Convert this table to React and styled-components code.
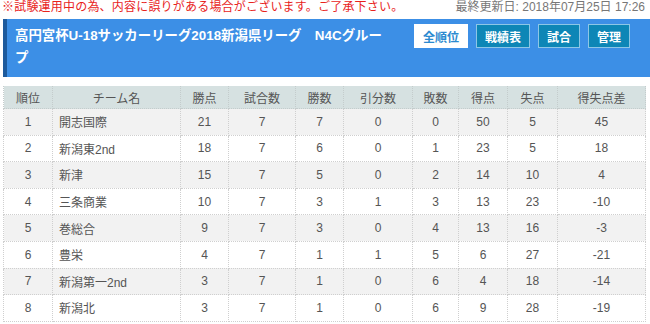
import styled, { createGlobalStyle } from 'styled-components';

const GlobalStyle = createGlobalStyle`
  html, body {
    margin: 0;
    padding: 0;
    background: #fff;
    font-family: "Liberation Sans", "Noto Sans CJK JP", sans-serif;
  }
`;

const Page = styled.div`
  width: 650px;
  padding: 0 0 0 3px;
  box-sizing: border-box;
`;

const Notice = styled.div`
  display: flex;
  justify-content: space-between;
  align-items: center;
  height: 15px;
  margin-left: -1px;
  padding-right: 5px;
  font-size: 12px;
  line-height: 15px;
`;

const Warning = styled.span`
  color: #e8231c;
  letter-spacing: 0.2px;
`;

const Updated = styled.span`
  color: #777;
`;

const Header = styled.div`
  display: flex;
  align-items: flex-start;
  margin-top: 4px;
  height: 58px;
  box-sizing: border-box;
  background: #3c8fe6;
  border-left: 4px solid #1d5a9c;
  padding: 6px 20px 0 8px;
`;

const Title = styled.h1`
  width: 378px;
  margin: 0;
  color: #fff;
  font-size: 13.4px;
  font-weight: bold;
  line-height: 22px;
`;

const Buttons = styled.div`
  display: flex;
  gap: 8px;
  margin-left: auto;
  margin-top: -1px;
`;

const NavButton = styled.div`
  height: 24px;
  box-sizing: border-box;
  padding: 0 8px;
  display: flex;
  align-items: center;
  font-size: 12px;
  font-weight: bold;
  border: 1px solid ${p => (p.$active ? '#fff' : '#8cc6e6')};
  background: ${p => (p.$active ? '#fff' : '#0d86b6')};
  color: ${p => (p.$active ? '#2b8ad0' : '#fff')};
`;

const Table = styled.table`
  margin-top: 9px;
  width: 642px;
  border-collapse: collapse;
  table-layout: fixed;
  font-size: 12px;
  color: #555;
`;

const Th = styled.th`
  height: 22px;
  padding: 0;
  background: #d6e1e1;
  font-weight: normal;
  color: #555;
  border: 1px dotted #c4cccc;
  border-top: none;
`;

const Row = styled.tr`
  background: ${p => (p.$odd ? '#f2f2f2' : '#fff')};
`;

const Td = styled.td`
  height: 25.6px;
  padding: 0;
  text-align: ${p => (p.$left ? 'left' : 'center')};
  padding-left: ${p => (p.$left ? '6px' : '0')};
  border: 1px dotted #cfcfcf;
`;

const cols = [
  ['順位', 49],
  ['チーム名', 128],
  ['勝点', 48],
  ['試合数', 67],
  ['勝数', 48],
  ['引分数', 69],
  ['敗数', 46],
  ['得点', 49],
  ['失点', 50],
  ['得失点差', 88],
];

const rows = [
  [1, '開志国際', 21, 7, 7, 0, 0, 50, 5, 45],
  [2, '新潟東2nd', 18, 7, 6, 0, 1, 23, 5, 18],
  [3, '新津', 15, 7, 5, 0, 2, 14, 10, 4],
  [4, '三条商業', 10, 7, 3, 1, 3, 13, 23, -10],
  [5, '巻総合', 9, 7, 3, 0, 4, 13, 16, -3],
  [6, '豊栄', 4, 7, 1, 1, 5, 6, 27, -21],
  [7, '新潟第一2nd', 3, 7, 1, 0, 6, 4, 18, -14],
  [8, '新潟北', 3, 7, 1, 0, 6, 9, 28, -19],
];

const App = () => {
  return (
    <Page>
      <GlobalStyle />
      <Notice>
        <Warning>※試験運用中の為、内容に誤りがある場合がございます。ご了承下さい。</Warning>
        <Updated>最終更新日: 2018年07月25日 17:26</Updated>
      </Notice>
      <Header>
        <Title>高円宮杯U-18サッカーリーグ2018新潟県リーグ　N4Cグループ</Title>
        <Buttons>
          <NavButton $active>全順位</NavButton>
          <NavButton>戦績表</NavButton>
          <NavButton>試合</NavButton>
          <NavButton>管理</NavButton>
        </Buttons>
      </Header>
      <Table>
        <colgroup>
          {cols.map(([name, w]) => (
            <col key={name} style={{ width: w }} />
          ))}
        </colgroup>
        <thead>
          <tr>
            {cols.map(([name]) => (
              <Th key={name}>{name}</Th>
            ))}
          </tr>
        </thead>
        <tbody>
          {rows.map((r, i) => (
            <Row key={r[0]} $odd={i % 2 === 0}>
              {r.map((v, j) => (
                <Td key={j} $left={j === 1}>{v}</Td>
              ))}
            </Row>
          ))}
        </tbody>
      </Table>
    </Page>
  );
};

export default App;
